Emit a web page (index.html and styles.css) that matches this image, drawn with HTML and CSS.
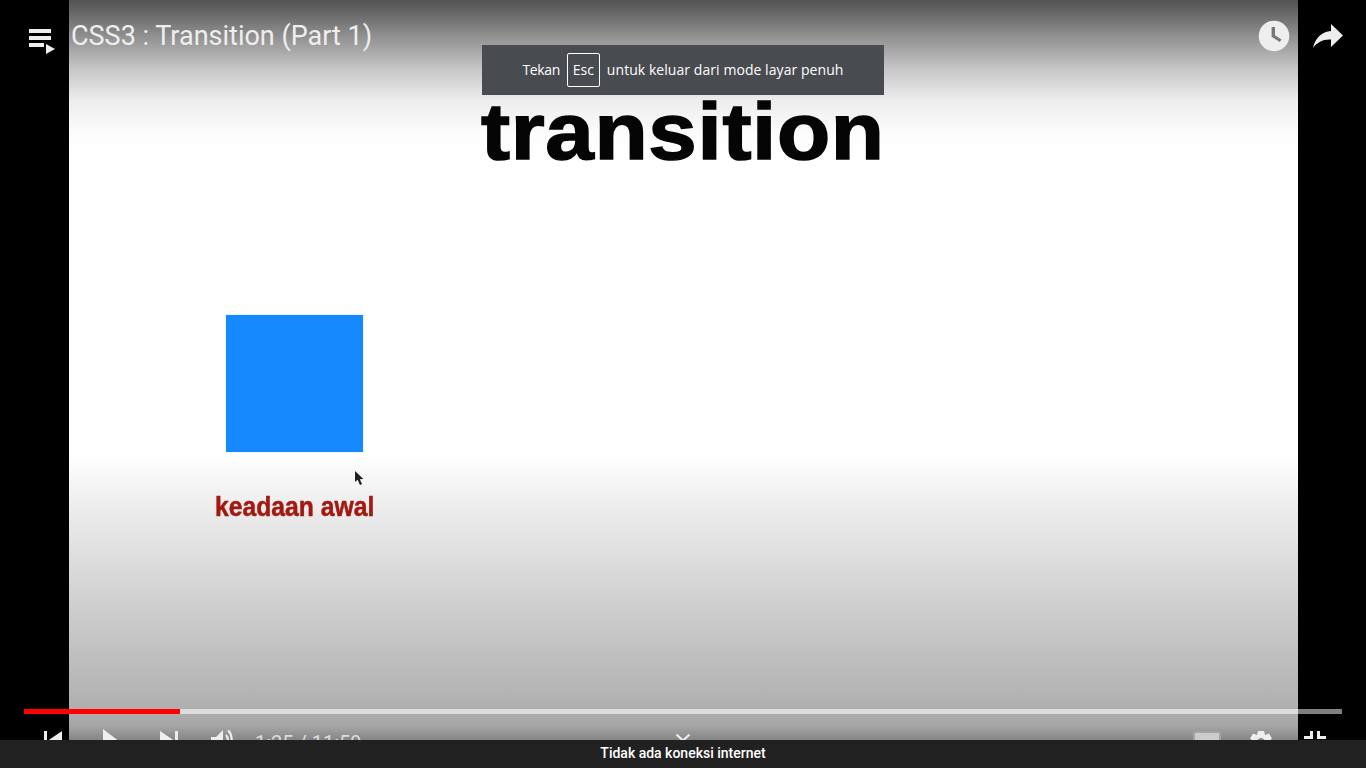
FILE: index.html
```html
<!DOCTYPE html>
<html lang="en">

<head>
  <meta charset="UTF-8">
  <meta name="viewport" content="width=device-width, initial-scale=1.0">
  <title>CSS3 : Transition (Part 1)</title>
  <link rel="stylesheet" href="styles.css">
</head>

<body>
  <main class="player">
    <div class="frame">
      <div class="slide-title">transition</div>
      <div class="slide-box"></div>
      <div class="slide-label">keadaan awal</div>
      <svg class="slide-cursor" viewBox="0 0 12 17" width="12" height="17">
        <path d="M1 0 L1 11 L3.6 8.8 L6 14 L8 13 L5.8 8.2 L9.4 8 Z" fill="#222" />
      </svg>
    </div>

    <div class="shade-top"></div>
    <div class="shade-bottom"></div>

    <header class="top-bar">
      <svg class="icon-playlist" viewBox="0 0 27 26" width="27" height="26">
        <path d="M1 0 H23 V4 H1 Z M1 7 H23 V11 H1 Z M1 14 H16 V18 H1 Z" fill="#eee" />
        <path d="M18 15 L27 20 L18 25 Z" fill="#eee" />
      </svg>
      <h1 class="video-title">CSS3 : Transition (Part 1)</h1>
      <svg class="icon-clock" viewBox="0 0 32 32" width="32" height="32">
        <circle cx="16" cy="16" r="15.3" fill="#eee" />
        <path d="M13.600 7 H17 V15.200 L23.500 19.500 L21.800 22 L13.600 16.800 Z" fill="#777" />
      </svg>
      <svg class="icon-share" viewBox="0 0 32 26" width="32" height="26">
        <path d="M1 25 C3 15 10 8.600 19 8 V1 L31 12.500 L19 24 V16.500 C11 16 5.500 19 1 25 Z" fill="#eee" />
      </svg>
    </header>

    <div class="fs-notice">
      <span class="notice-lead">Tekan</span>
      <span class="key">Esc</span>
      <span class="notice-rest">untuk keluar dari mode layar penuh</span>
    </div>

    <svg class="icon-chevron" viewBox="0 0 16 10" width="16" height="10">
      <path d="M1.500 1.500 L8 7.500 L14.500 1.500" fill="none" stroke="#eee" stroke-width="2.200" />
    </svg>

    <div class="controls">
      <div class="progress">
        <div class="progress-played"></div>
      </div>
      <div class="buttons">
        <svg class="icon-prev" viewBox="0 0 20 20" width="20" height="20">
          <path d="M1 1 H4 V20 H1 Z M19 1 V20 L5 10.500 Z" fill="#eee" />
        </svg>
        <svg class="icon-play" viewBox="0 0 22 30" width="22" height="30">
          <path d="M2 1 L21 15.500 L2 30 Z" fill="#eee" />
        </svg>
        <svg class="icon-next" viewBox="0 0 20 20" width="20" height="20">
          <path d="M1 1 L15 10.500 L1 20 Z M16 1 H19 V20 H16 Z" fill="#eee" />
        </svg>
        <svg class="icon-volume" viewBox="0 0 24 24" width="24" height="24">
          <path d="M1 9 H6 L13 2 V24 L6 17 H1 Z" fill="#eee" />
          <path d="M16 7 C18.500 9 18.500 17 16 19 M18 2.500 C23 6 23 20 18 24" fill="none" stroke="#eee" stroke-width="2.200" />
        </svg>
        <span class="time">1:25 / 11:59</span>
        <span class="spacer"></span>
        <div class="icon-subtitles"></div>
        <svg class="icon-gear" viewBox="0 0 24 24" width="24" height="24">
          <path d="M9 1 H15 L16 5 L20 3.500 L23 8.500 L20 11 V13 L23 16 L20 21 L16 19 L15 23 H9 L8 19 L4 21 L1 16 L4 13 V11 L1 8.500 L4 3.500 L8 5 Z M12 8 A4 4 0 1 0 12.010 8 Z" fill="#eee" fill-rule="evenodd" />
        </svg>
        <svg class="icon-exit-fs" viewBox="0 0 24 24" width="24" height="24">
          <path d="M1 6 H7 V1 H10 V9 H1 Z M14 1 H17 V6 H23 V9 H14 Z" fill="#eee" />
        </svg>
      </div>
    </div>
  </main>

  <footer class="offline-bar">Tidak ada koneksi internet</footer>
</body>

</html>
```

FILE: styles.css
```css
html,
body {
  height: 100%;
}

body {
  margin: 0;
  background-color: black;
  display: flex;
  flex-direction: column;
  overflow: hidden;
  font-family: Roboto, sans-serif;
  color: #eee;
}

.player {
  position: relative;
  flex: 1;
  overflow: hidden;
  display: flex;
  justify-content: center;
}

.frame {
  position: relative;
  width: 1229px;
  background-color: white;
}

.slide-title {
  position: absolute;
  left: 412px;
  top: 84px;
  font-family: "Liberation Sans", sans-serif;
  font-weight: 700;
  font-size: 80px;
  line-height: 96px;
  letter-spacing: 0.6px;
  color: #050505;
  -webkit-text-stroke: 1.5px #050505;
  transform: scaleX(1.09);
  transform-origin: left;
  filter: blur(0.7px);
}

.slide-box {
  position: absolute;
  left: 157px;
  top: 315px;
  width: 137px;
  height: 137px;
  background-color: #1589fd;
  box-shadow: 0 0 1px #7fc0ff;
}

.slide-label {
  position: absolute;
  left: 146px;
  top: 490px;
  font-family: "Liberation Sans", sans-serif;
  font-weight: 700;
  font-size: 27px;
  line-height: 34px;
  color: #b01a12;
  -webkit-text-stroke: 0.5px #b01a12;
  transform: scaleX(0.915);
  transform-origin: left;
  filter: blur(0.6px);
}

.slide-cursor {
  position: absolute;
  left: 285px;
  top: 471px;
  filter: blur(0.4px);
}

.shade-top {
  position: absolute;
  left: 0;
  right: 0;
  top: 0;
  height: 150px;
  background: linear-gradient(to bottom, rgba(0, 0, 0, 0.68), rgba(0, 0, 0, 0.46) 22%, rgba(0, 0, 0, 0.23) 45%, rgba(0, 0, 0, 0.07) 67%, rgba(0, 0, 0, 0.01) 89%, rgba(0, 0, 0, 0));
}

.shade-bottom {
  position: absolute;
  left: 0;
  right: 0;
  bottom: 0;
  height: 285px;
  background: linear-gradient(to bottom, rgba(0, 0, 0, 0), rgba(0, 0, 0, 0.07) 18%, rgba(0, 0, 0, 0.15) 41%, rgba(0, 0, 0, 0.23) 65%, rgba(0, 0, 0, 0.31) 88%, rgba(0, 0, 0, 0.35) 95%, rgba(0, 0, 0, 0.48));
}

.top-bar {
  position: absolute;
  left: 28px;
  right: 22px;
  top: 20px;
  display: flex;
  align-items: center;
  height: 32px;
}

.icon-playlist {
  margin-top: 12px;
}

.video-title {
  flex: 1;
  margin: 0 0 0 16px;
  font-size: 27px;
  font-weight: 400;
  line-height: 32px;
  color: #eee;
}

.icon-share {
  margin-left: 22px;
}

.fs-notice {
  position: absolute;
  left: 482px;
  top: 45px;
  width: 402px;
  height: 50px;
  box-sizing: border-box;
  display: flex;
  align-items: center;
  justify-content: center;
  gap: 7px;
  background-color: #484b50;
  font-family: "Open Sans", sans-serif;
  font-size: 14px;
  color: white;
}

.notice-lead,
.notice-rest {
  padding-bottom: 2px;
}

.notice-lead {
  letter-spacing: -0.4px;
}

.notice-rest {
  letter-spacing: 0.06px;
}

.key {
  display: flex;
  align-items: center;
  justify-content: center;
  width: 33px;
  height: 34px;
  box-sizing: border-box;
  border: 1px solid white;
  border-radius: 2px;
  padding-bottom: 2px;
}

.icon-chevron {
  position: absolute;
  left: 675px;
  top: 733px;
}

.controls {
  position: absolute;
  left: 24px;
  right: 24px;
  top: 709px;
}

.progress {
  height: 5px;
  background: linear-gradient(to right, #ddd 1274px, #808080 1274px);
}

.progress-played {
  width: 156px;
  height: 5px;
  background-color: #f00;
}

.buttons {
  display: flex;
  align-items: flex-start;
  padding: 16px 15px 0 19px;
}

.icon-play {
  margin: -2px 0 0 38px;
}

.icon-next {
  margin: 0 0 0 36px;
}

.icon-volume {
  margin: -2px 0 0 31px;
}

.time {
  margin-top: -2px;
  margin-left: 21px;
  font-size: 20px;
  line-height: 30px;
  color: #ddd;
}

.spacer {
  flex: 1;
}

.icon-subtitles {
  width: 28px;
  height: 24px;
  margin-top: 1px;
  box-sizing: border-box;
  border: 2px solid #a4a4a4;
  border-radius: 3px;
  background-color: #ccc;
}

.icon-gear {
  margin-left: 28px;
}

.icon-exit-fs {
  margin-left: 30px;
}

.offline-bar {
  height: 28px;
  flex-shrink: 0;
  background-color: #212121;
  color: white;
  font-size: 14px;
  font-weight: 500;
  line-height: 26px;
  text-align: center;
}
```
